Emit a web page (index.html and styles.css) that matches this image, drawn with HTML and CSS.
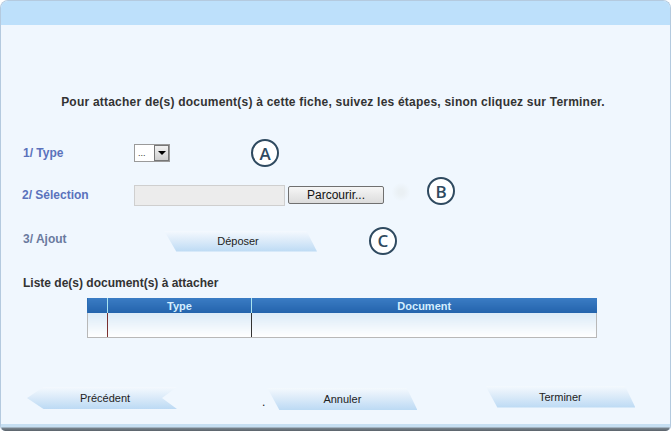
FILE: index.html
```html
<!DOCTYPE html>
<html lang="fr">
<head>
    <meta charset="UTF-8">
    <title>Attacher des documents</title>
    <link rel="stylesheet" href="styles.css">
</head>
<body>
    <div class="window">
        <div class="title-bar"></div>

        <p class="intro">Pour attacher de(s) document(s) à cette fiche, suivez les étapes, sinon cliquez sur Terminer.</p>

        <div class="step step-type">
            <div class="step-label">1/ Type</div>
            <div class="select-box">
                <span class="select-value">...</span>
                <span class="select-arrow"></span>
            </div>
            <span class="badge badge-a">A</span>
        </div>

        <div class="step step-selection">
            <div class="step-label">2/ Sélection</div>
            <div class="file-field"></div>
            <button class="browse-button">Parcourir...</button>
            <span class="ghost-icon"></span>
            <span class="badge badge-b">B</span>
        </div>

        <div class="step step-ajout">
            <div class="step-label grey">3/ Ajout</div>
            <div class="shape-button slant deposer">Déposer</div>
            <span class="badge badge-c">C</span>
        </div>

        <div class="list-title">Liste de(s) document(s) à attacher</div>

        <table class="doc-table">
            <thead>
                <tr>
                    <th class="col-sel"></th>
                    <th class="col-type">Type</th>
                    <th class="col-doc">Document</th>
                </tr>
            </thead>
            <tbody>
                <tr>
                    <td></td>
                    <td></td>
                    <td></td>
                </tr>
            </tbody>
        </table>

        <div class="actions">
            <div class="shape-button back">Précédent</div>
            <span class="dot">.</span>
            <div class="shape-button slant cancel">Annuler</div>
            <div class="shape-button slant finish">Terminer</div>
        </div>

        <div class="bottom-band"></div>
    </div>
</body>
</html>
```

FILE: styles.css
```css
body {
    margin: 0;
    padding: 0;
    font-family: "Liberation Sans", Arial, sans-serif;
    background-color: #ffffff;
}
.window {
    width: 671px;
    height: 431px;
    box-sizing: border-box;
    background-color: #f0f7fe;
    border: 1px solid #b4cadf;
    border-bottom: none;
    border-radius: 8px 8px 5px 5px;
    overflow: hidden;
    display: flex;
    flex-direction: column;
    position: relative;
}
.title-bar {
    height: 24px;
    background-color: #bde0fb;
}
.intro {
    margin: 69px 0 0 0;
    text-align: center;
    font-size: 12px;
    font-weight: bold;
    line-height: 16px;
    letter-spacing: 0.22px;
    color: #333;
    padding-right: 5px;
}
.step {
    display: flex;
    align-items: center;
    padding-left: 21px;
}
.step-type {
    height: 42px;
    margin-top: 22px;
}
.step-selection {
    height: 42px;
}
.step-ajout {
    height: 46px;
}
.step-label {
    width: 112px;
    font-size: 12px;
    font-weight: bold;
    color: #5a72bc;
    padding-left: 1px;
    box-sizing: border-box;
}
.step-selection .step-label {
    padding-left: 0;
}
.step-label.grey {
    color: #6a7a9e;
}
.select-box {
    width: 36px;
    height: 18px;
    box-sizing: border-box;
    border: 1px solid #9a9a9a;
    background: #ffffff;
    display: flex;
    align-items: center;
    justify-content: space-between;
}
.select-value {
    font-size: 9px;
    color: #333;
    padding-left: 3px;
    line-height: 10px;
}
.select-arrow {
    width: 15px;
    height: 16px;
    box-sizing: border-box;
    border: 1px solid #777;
    background: linear-gradient(#f2f2f2, #cfcfcf);
    position: relative;
}
.select-arrow::after {
    content: '';
    position: absolute;
    left: 3px;
    top: 5px;
    border-left: 4px solid transparent;
    border-right: 4px solid transparent;
    border-top: 4px solid #000;
}
.badge {
    width: 24px;
    height: 24px;
    border: 2px solid #2f4a60;
    border-radius: 50%;
    display: flex;
    align-items: center;
    justify-content: center;
    font-family: "Open Sans", "Liberation Sans", sans-serif;
    font-size: 17px;
    font-weight: 600;
    color: #2f4a60;
    background: #ffffff;
    flex-shrink: 0;
}
.badge-a {
    margin-left: 81px;
}
.badge-b {
    margin-left: 17px;
    margin-top: -8px;
}
.badge-c {
    margin-left: 52px;
    margin-top: 3px;
}
.file-field {
    width: 151px;
    height: 21px;
    box-sizing: border-box;
    border: 1px solid #cfcfcf;
    background-color: #ececec;
}
.browse-button {
    margin-left: 3px;
    width: 96px;
    height: 18px;
    padding: 0;
    border: 1px solid #707070;
    border-radius: 2px;
    background: linear-gradient(#f6f6f6, #dcdcdc);
    font-family: "Liberation Sans", Arial, sans-serif;
    font-size: 12px;
    color: #111;
    line-height: 14px;
}
.ghost-icon {
    width: 18px;
    height: 20px;
    margin-left: 8px;
    margin-top: -6px;
    background: radial-gradient(circle, #eaf0f4 20%, rgba(240, 247, 254, 0) 70%);
}
.shape-button {
    width: 150px;
    height: 22px;
    display: flex;
    align-items: center;
    justify-content: center;
    font-size: 11px;
    color: #222;
    background: linear-gradient(#f4f9fe 0%, #dcebf9 45%, #bcdaf4 100%);
}
.slant {
    clip-path: polygon(0 0, 93% 0, 100% 100%, 8% 100%);
}
.deposer {
    width: 153px;
    height: 21px;
    margin-left: 30px;
    margin-top: 4px;
    padding-right: 5px;
    box-sizing: border-box;
}
.back {
    clip-path: polygon(0 50%, 11% 0, 100% 0, 90% 50%, 100% 100%, 11% 100%);
    width: 150px;
    height: 22px;
    margin-top: 1px;
    padding-left: 6px;
    box-sizing: border-box;
}
.list-title {
    margin-top: 13px;
    padding-left: 22px;
    font-size: 12px;
    font-weight: bold;
    color: #333;
    line-height: 16px;
}
.doc-table {
    margin: 7px 0 0 86px;
    width: 510px;
    border-collapse: collapse;
    font-size: 11px;
}
.doc-table th {
    height: 15px;
    padding: 0;
    background: linear-gradient(#3a7cc4, #2463ac);
    color: #d4eeff;
    font-weight: bold;
    border-left: 1px solid #a9e4f0;
    line-height: 14px;
}
.doc-table th:first-child {
    border-left: 1px solid #2a6cb3;
}
.doc-table td {
    height: 24px;
    padding: 0;
    background: linear-gradient(#dbeaf7, #ffffff);
    border-left: 1px solid #333;
    border-bottom: 1px solid #b8b8b8;
}
.doc-table td:first-child {
    border-left: 1px solid #b8b8b8;
}
.doc-table td:nth-child(2) {
    border-left: 1px solid #7a3030;
}
.doc-table td:last-child {
    border-right: 1px solid #b8b8b8;
}
.col-sel {
    width: 19px;
}
.col-type {
    width: 143px;
}
.actions {
    margin-top: auto;
    margin-bottom: 14px;
    display: flex;
    align-items: center;
    padding-left: 26px;
}
.dot {
    font-size: 12px;
    color: #222;
    margin-left: 85px;
    margin-top: 9px;
}
.cancel {
    width: 150px;
    margin-left: 2px;
    margin-top: 3px;
}
.finish {
    width: 150px;
    margin-left: 68px;
    margin-top: -2px;
}
.bottom-band {
    height: 7px;
    background: linear-gradient(#c6dff2 0%, #c6dff2 45%, #7c8790 55%, #5a626a 100%);
}
```
